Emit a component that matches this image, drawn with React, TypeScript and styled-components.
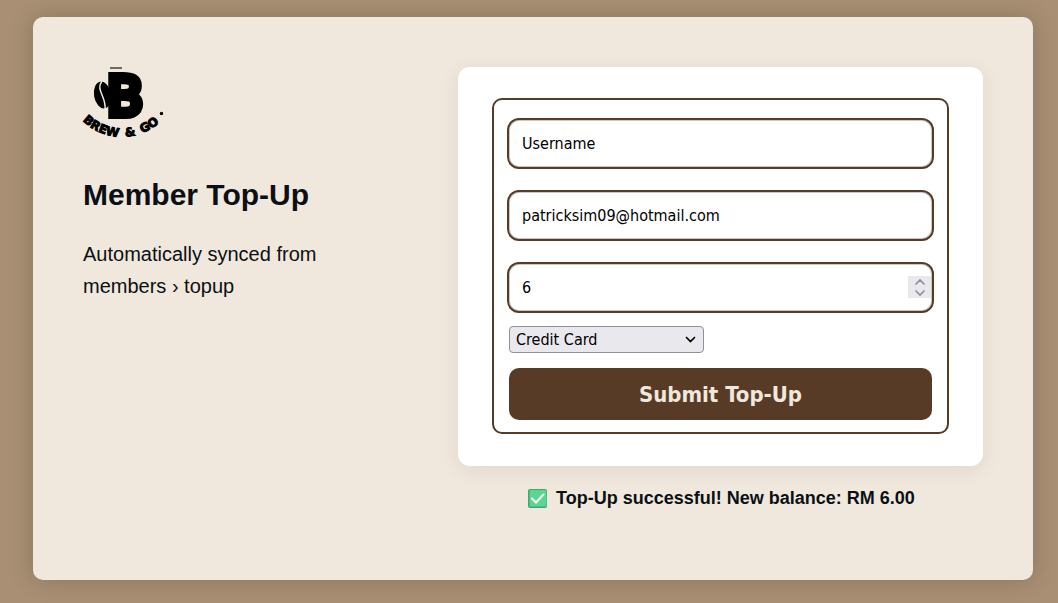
import React, { useState } from "react";
import styled, { createGlobalStyle } from "styled-components";

const brown = "#583b26";
const cream = "#f1e8dd";
const ink = "#0b1014";
const uiFont = `"DejaVu Sans Condensed", "Noto Sans", sans-serif`;

const GlobalStyle = createGlobalStyle`
  *, *::before, *::after { box-sizing: border-box; }
  body {
    margin: 0;
    background: #a99074;
    color: ${ink};
    font-family: "Liberation Sans", Arial, sans-serif;
  }
`;

const Page = styled.div`
  min-height: 100vh;
  padding: 17px 25px 23px 33px;
  display: flex;
  justify-content: center;
`;

const Panel = styled.main`
  width: 100%;
  max-width: 1000px;
  padding: 50px;
  display: flex;
  gap: 50px;
  background: ${cream};
  border-radius: 10px;
  box-shadow: 0 0 25px rgba(0, 0, 0, 0.2);
`;

const Intro = styled.section`
  flex: 13;
  min-width: 0;
`;

const Logo = styled.svg`
  display: block;
  width: 80px;
  height: 80px;
  overflow: visible;
`;

const Title = styled.h1`
  margin: 30px 0 25px;
  font-size: 30px;
  line-height: 36px;
`;

const Lead = styled.p`
  max-width: 260px;
  margin: 0;
  font-size: 20px;
  line-height: 32px;
`;

const Content = styled.section`
  flex: 21;
  min-width: 0;
`;

const Card = styled.div`
  padding: 31px 34px 32px;
  background: #fff;
  border-radius: 12px;
  box-shadow: 0 4px 20px rgba(0, 0, 0, 0.08);
`;

const Form = styled.form`
  padding: 18px 13px 12px;
  display: flex;
  flex-direction: column;
  border: 2px solid ${brown};
  border-radius: 10px;
`;

const Fields = styled.div`
  display: grid;
  gap: 21px;
`;

const Field = styled.div`
  position: relative;
`;

const Input = styled.input`
  display: block;
  width: 100%;
  height: 51px;
  padding: 0 13px;
  border: 2px solid ${brown};
  border-radius: 12px;
  outline: none;
  background: #fff;
  box-shadow: inset 0 0 0 1px #c8c8cc;
  color: #000;
  font: 16px ${uiFont};
  appearance: textfield;

  &::placeholder { color: #000; opacity: 1; }
  &::-webkit-inner-spin-button { appearance: none; margin: 0; }
`;

const Stepper = styled.div`
  position: absolute;
  top: 14px;
  right: 3px;
  width: 23px;
  height: 22px;
  display: grid;
  background: #e9e9ed;
`;

const StepButton = styled.button`
  padding: 0;
  border: 0;
  display: grid;
  place-items: center;
  background: transparent;
  color: #8f8f9d;
`;

const SelectWrap = styled.div`
  position: relative;
  width: 195px;
  margin: 13px 2px 15px;
`;

const Select = styled.select`
  display: block;
  width: 100%;
  height: 27px;
  padding: 0 24px 0 6px;
  appearance: none;
  border: 1px solid #8f8f9d;
  border-radius: 4px;
  background: #e9e9ed;
  color: #000;
  font: 16px ${uiFont};
`;

const SelectArrow = styled.svg`
  position: absolute;
  top: 10px;
  right: 8px;
  pointer-events: none;
`;

const Submit = styled.button`
  height: 52px;
  margin: 0 2px;
  padding: 0;
  border: 0;
  border-radius: 10px;
  background: ${brown};
  color: ${cream};
  font: bold 22px ${uiFont};
`;

const Status = styled.p`
  margin: 21px 0 0;
  padding-left: 2px;
  display: flex;
  align-items: center;
  justify-content: center;
  gap: 9px;
  font-size: 18px;
  font-weight: bold;
  line-height: 22px;
`;

const BrewLogo = () => (
  <Logo viewBox="0 0 80 80" role="img" aria-label="Brew &amp; Go">
    <rect x="27" y="0" width="12" height="2" fill="#39352f" opacity="0.7" />
    <ellipse cx="19.500" cy="28" rx="8.500" ry="13.500" transform="rotate(-10 19.500 28)" />
    <path d="M19 14C12 23 24 30 22 43" fill="none" stroke={cream} strokeWidth="1.500" />
    <text x="24" y="48" fontFamily="Noto Sans" fontWeight="400" fontSize="54" stroke="#000" strokeWidth="8">B</text>
    <path id="logo-arc" d="M-1 53A56 56 0 0 0 79 53" fill="none" />
    <g fontFamily="DejaVu Sans" fontWeight="700" fontSize="12" stroke="#000" strokeWidth="1">
      <text><textPath href="#logo-arc" startOffset="1">BREW</textPath></text>
      <text><textPath href="#logo-arc" startOffset="48">&amp;</textPath></text>
      <text><textPath href="#logo-arc" startOffset="65">GO</textPath></text>
    </g>
    <circle cx="78.500" cy="46.500" r="1.700" />
  </Logo>
);

const Chevron = ({ up = false }: { up?: boolean }) => (
  <svg width="10" height="6" viewBox="0 0 10 6" fill="none" stroke="currentColor" strokeWidth="1.700" strokeLinecap="round" aria-hidden="true">
    <path d={up ? "M1 5l4-4 4 4" : "M1 1l4 4 4-4"} />
  </svg>
);

export default function App() {
  const [email, setEmail] = useState("patricksim09@hotmail.com");
  const [amount, setAmount] = useState(6);

  return (
    <>
      <GlobalStyle />
      <Page>
        <Panel>
          <Intro>
            <BrewLogo />
            <Title>Member Top-Up</Title>
            <Lead>Automatically synced from members › topup</Lead>
          </Intro>
          <Content>
            <Card>
              <Form onSubmit={(e) => e.preventDefault()}>
                <Fields>
                  <Field>
                    <Input type="text" placeholder="Username" aria-label="Username" />
                  </Field>
                  <Field>
                    <Input type="email" value={email} onChange={(e) => setEmail(e.target.value)} aria-label="Email" />
                  </Field>
                  <Field>
                    <Input type="number" value={amount} onChange={(e) => setAmount(Number(e.target.value))} aria-label="Amount" />
                    <Stepper>
                      <StepButton type="button" aria-label="Increase amount" onClick={() => setAmount(amount + 1)}>
                        <Chevron up />
                      </StepButton>
                      <StepButton type="button" aria-label="Decrease amount" onClick={() => setAmount(amount - 1)}>
                        <Chevron />
                      </StepButton>
                    </Stepper>
                  </Field>
                </Fields>
                <SelectWrap>
                  <Select aria-label="Payment method" defaultValue="Credit Card">
                    <option>Credit Card</option>
                  </Select>
                  <SelectArrow width="11" height="7" viewBox="0 0 11 7" fill="none" stroke="#000" strokeWidth="1.700" strokeLinecap="round" aria-hidden="true">
                    <path d="M1.500 1.500l4 4 4-4" />
                  </SelectArrow>
                </SelectWrap>
                <Submit type="submit">Submit Top-Up</Submit>
              </Form>
            </Card>
            <Status role="status">
              <svg width="19" height="19" viewBox="0 0 19 19" aria-hidden="true">
                <rect width="19" height="19" rx="2" fill="#3fa673" />
                <rect x="1.500" y="1" width="17" height="16.500" rx="1" fill="#5ad690" />
                <path d="M4 9.500l4 4 7.500-8" fill="none" stroke="#fff" strokeWidth="2" strokeLinecap="round" />
              </svg>
              Top-Up successful! New balance: RM 6.00
            </Status>
          </Content>
        </Panel>
      </Page>
    </>
  );
}
